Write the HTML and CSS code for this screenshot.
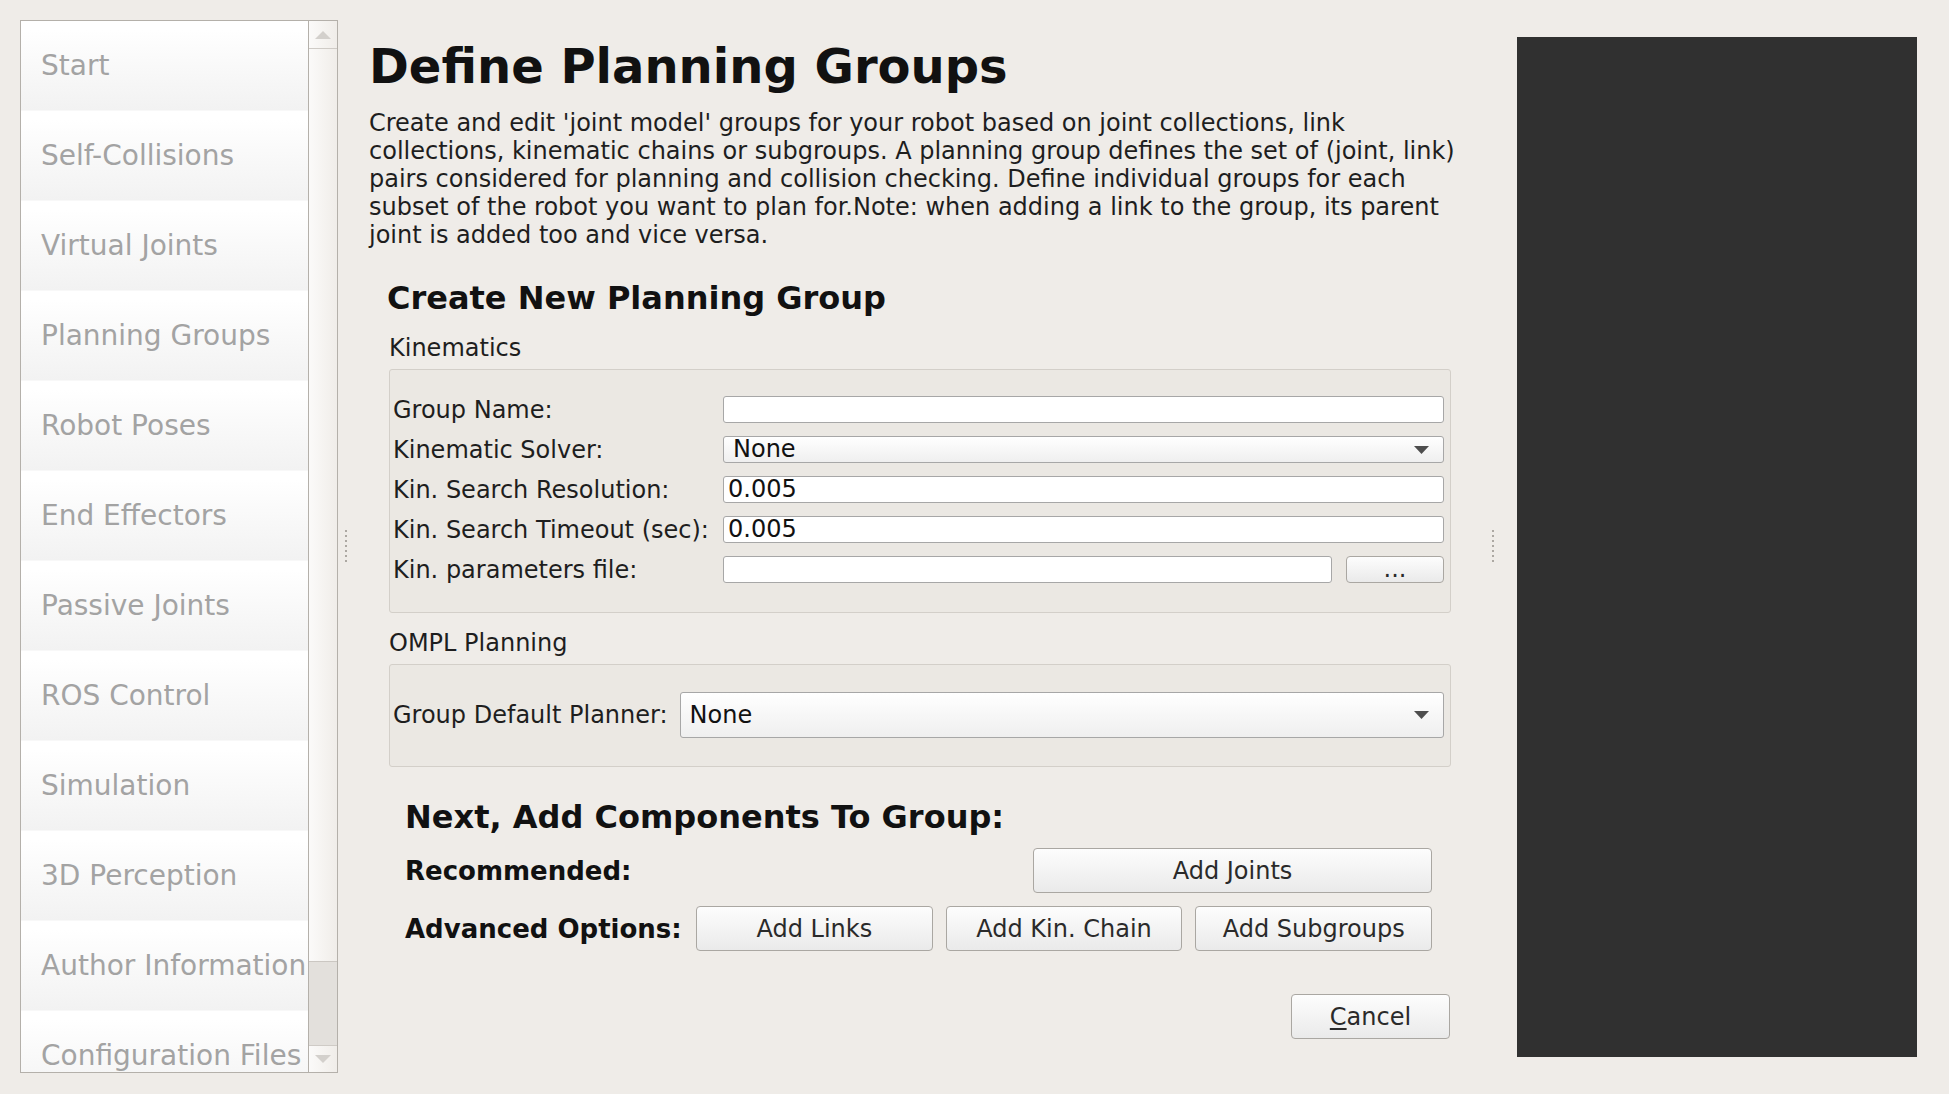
FILE: index.html
```html
<!DOCTYPE html>
<html>
<head>
<meta charset="utf-8">
<title>Define Planning Groups</title>
<link rel="stylesheet" href="styles.css">
</head>
<body>
<div class="app">
  <aside class="sidebar">
    <ul class="nav">
      <li>Start</li>
      <li>Self-Collisions</li>
      <li>Virtual Joints</li>
      <li>Planning Groups</li>
      <li>Robot Poses</li>
      <li>End Effectors</li>
      <li>Passive Joints</li>
      <li>ROS Control</li>
      <li>Simulation</li>
      <li>3D Perception</li>
      <li>Author Information</li>
      <li>Configuration Files</li>
    </ul>
    <div class="scrollbar">
      <div class="sb-btn sb-up"><svg width="16" height="8" viewBox="0 0 16 8"><path d="M0 8 L8 0 L16 8 Z" fill="#d3d0cc"/></svg></div>
      <div class="sb-track"></div>
      <div class="sb-handle"></div>
      <div class="sb-btn sb-down"><svg width="16" height="8" viewBox="0 0 16 8"><path d="M0 0 L8 8 L16 0 Z" fill="#d3d0cc"/></svg></div>
    </div>
  </aside>

  <div class="splitter splitter-left"><span class="dots"></span></div>

  <main class="main">
    <h1 class="title">Define Planning Groups</h1>
    <p class="intro">Create and edit 'joint model' groups for your robot based on joint collections, link collections, kinematic chains or subgroups. A planning group defines the set of (joint, link) pairs considered for planning and collision checking. Define individual groups for each subset of the robot you want to plan for.Note: when adding a link to the group, its parent joint is added too and vice versa.</p>

    <section class="section">
      <h2 class="heading create">Create New Planning Group</h2>

      <div class="box-title">Kinematics</div>
      <div class="groupbox kin">
        <div class="form">
          <label class="lbl">Group Name:</label>
          <div class="input"></div>

          <label class="lbl">Kinematic Solver:</label>
          <div class="combo small"><span>None</span><svg class="arrow" width="15" height="8" viewBox="0 0 15 8"><path d="M0 0 H15 L7.5 8 Z" fill="#4e4e4e"/></svg></div>

          <label class="lbl">Kin. Search Resolution:</label>
          <div class="input">0.005</div>

          <label class="lbl">Kin. Search Timeout (sec):</label>
          <div class="input">0.005</div>

          <label class="lbl">Kin. parameters file:</label>
          <div class="file-row">
            <div class="input grow"></div>
            <button class="btn browse">...</button>
          </div>
        </div>
      </div>

      <div class="box-title ompl-title">OMPL Planning</div>
      <div class="groupbox ompl">
        <label class="lbl">Group Default Planner:</label>
        <div class="combo large"><span>None</span><svg class="arrow" width="15" height="8" viewBox="0 0 15 8"><path d="M0 0 H15 L7.5 8 Z" fill="#4e4e4e"/></svg></div>
      </div>

      <div class="components">
        <h2 class="heading next">Next, Add Components To Group:</h2>
        <div class="row rec">
          <span class="blabel">Recommended:</span>
          <button class="btn joints">Add Joints</button>
        </div>
        <div class="row adv">
          <span class="blabel adv-label">Advanced Options:</span>
          <button class="btn flex">Add Links</button>
          <button class="btn flex">Add Kin. Chain</button>
          <button class="btn flex">Add Subgroups</button>
        </div>
      </div>

      <div class="cancel-row">
        <button class="btn cancel"><u>C</u>ancel</button>
      </div>
    </section>
  </main>

  <div class="splitter splitter-right"><span class="dots"></span></div>

  <div class="viewer"></div>
</div>
</body>
</html>
```

FILE: styles.css
```css
* { box-sizing: border-box; }

html, body {
  margin: 0;
  padding: 0;
}

body {
  width: 1949px;
  height: 1094px;
  overflow: hidden;
  background: #efece8;
  font-family: "DejaVu Sans", "Liberation Sans", sans-serif;
  color: #1e1e1e;
}

.app {
  display: flex;
  height: 1094px;
}

/* ---------- sidebar ---------- */
.sidebar {
  margin: 20px 0 21px 20px;
  width: 318px;
  height: 1053px;
  border: 1px solid #b4b0aa;
  display: flex;
  background: #fff;
  flex: none;
}

.nav {
  list-style: none;
  margin: 0;
  padding: 0;
  width: 287px;
  overflow: hidden;
  flex: none;
}

.nav li {
  height: 90px;
  padding-left: 20px;
  display: flex;
  align-items: center;
  font-size: 28px;
  color: #a3a3a3;
  white-space: nowrap;
  background: linear-gradient(#ffffff 10%, #f2f2f2);
  border-bottom: 1px solid #f8f8f8;
}

.scrollbar {
  width: 29px;
  border-left: 1px solid #b4b0aa;
  display: flex;
  flex-direction: column;
  background: linear-gradient(to right, #fbfaf9, #f0ede9);
}

.sb-btn {
  height: 28px;
  display: flex;
  align-items: center;
  justify-content: center;
  flex: none;
}

.sb-up { border-bottom: 1px solid #cfcbc6; }
.sb-down { border-top: 1px solid #cfcbc6; height: 27px; }

.sb-track { flex: 1; }

.sb-handle {
  height: 84px;
  flex: none;
  background: #e3e0dc;
  border-top: 1px solid #cbc7c2;
}

/* ---------- splitters ---------- */
.splitter {
  display: flex;
  align-items: center;
  flex: none;
}

.splitter-left { width: 31px; padding-left: 7px; }
.splitter-right { width: 47px; padding-left: 22px; }

.dots {
  display: block;
  width: 2px;
  height: 34px;
  background: repeating-linear-gradient(to bottom, #aca8a2 0 2px, transparent 2px 5px);
}

/* ---------- main ---------- */
.main {
  width: 1101px;
  flex: none;
  padding-top: 38px;
}

.title {
  margin: 0;
  font-size: 48px;
  line-height: 56px;
  font-weight: bold;
  color: #111;
}

.intro {
  margin: 15px 0 0;
  font-size: 24px;
  line-height: 28px;
  color: #1e1e1e;
}

.section {
  padding: 0 19px 0 20px;
}

.heading {
  margin: 0;
  font-size: 32px;
  line-height: 37px;
  font-weight: bold;
  color: #111;
}

.create { margin: 31px 0 0 -2px; }

.box-title {
  margin-top: 17px;
  font-size: 24px;
  line-height: 28px;
  color: #1e1e1e;
}

.ompl-title { margin-top: 16px; }

.groupbox {
  margin-top: 7px;
  border: 1px solid #d3cfc9;
  border-radius: 3px;
  background: #ebe8e3;
}

.kin { padding: 26px 6px 29px 3px; }

.form {
  display: grid;
  grid-template-columns: 330px 1fr;
  grid-auto-rows: 27px;
  row-gap: 13px;
  align-items: center;
}

.lbl {
  font-size: 24px;
  line-height: 28px;
  color: #1e1e1e;
  white-space: nowrap;
}

.input {
  height: 27px;
  border: 1px solid #a7a7a7;
  border-radius: 3px;
  background: #fff;
  font-size: 24px;
  line-height: 25px;
  padding-left: 4px;
  color: #111;
}

.file-row {
  display: flex;
  height: 27px;
}

.grow { flex: 1; }

.combo {
  display: flex;
  align-items: center;
  justify-content: space-between;
  border: 1px solid #a7a7a7;
  border-radius: 3px;
  background: linear-gradient(#ffffff, #efefef);
  font-size: 24px;
  color: #111;
  padding: 0 14px 0 9px;
}

.combo.small { height: 27px; line-height: 25px; }
.combo.large { height: 46px; flex: 1; }

.ompl {
  display: flex;
  align-items: center;
  gap: 12px;
  padding: 27px 6px 28px 3px;
}

/* ---------- buttons ---------- */
.btn {
  font-family: "DejaVu Sans", "Liberation Sans", sans-serif;
  font-size: 24px;
  color: #2a2a2a;
  border: 1px solid #aaa7a2;
  border-radius: 4px;
  background: linear-gradient(#fdfdfd, #eaeaea);
  padding: 0;
  height: 45px;
}

.browse {
  width: 98px;
  height: 27px;
  margin-left: 14px;
  line-height: 25px;
}

.components {
  padding: 0 19px 0 16px;
}

.next { margin-top: 32px; }

.row {
  display: flex;
  align-items: center;
  height: 45px;
}

.rec { margin-top: 12px; }
.adv { margin-top: 13px; gap: 13px; }

.blabel {
  font-size: 26px;
  font-weight: bold;
  color: #111;
  white-space: nowrap;
}

.adv-label { width: 278px; flex: none; }

.joints { width: 399px; margin-left: auto; }

.flex { flex: 1; }

.cancel-row {
  display: flex;
  justify-content: flex-end;
  margin-top: 43px;
  padding-right: 1px;
}

.cancel { width: 159px; }
.cancel u { text-decoration-thickness: 2px; text-underline-offset: 3px; }

/* ---------- viewer ---------- */
.viewer {
  margin-top: 37px;
  width: 400px;
  height: 1020px;
  background: #303030;
  flex: none;
}
```
